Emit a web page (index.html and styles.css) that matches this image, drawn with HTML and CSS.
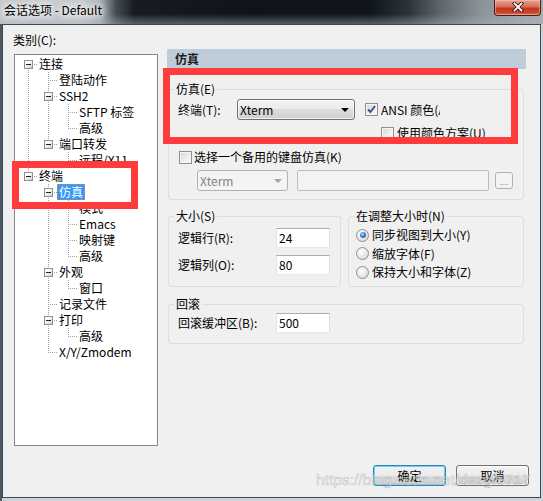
FILE: index.html
```html
<!DOCTYPE html>
<html lang="zh">
<head>
<meta charset="utf-8">
<title>会话选项 - Default</title>
<link rel="stylesheet" href="styles.css">
</head>
<body>
<div class="window">
  <div class="titlebar">
    <div class="title">会话选项 - Default</div>
    <div class="close">
      <svg width="12" height="10" viewBox="0 0 12 10"><path d="M2.5 1.5 L9.5 8.5 M9.5 1.5 L2.5 8.5" stroke="#3a1610" stroke-width="3.6" stroke-linecap="square" fill="none"/><path d="M2.5 1.5 L9.5 8.5 M9.5 1.5 L2.5 8.5" stroke="#ffffff" stroke-width="1.8" stroke-linecap="square" fill="none"/></svg>
    </div>
  </div>
  <div class="client">
    <div class="main">
      <div class="left">
        <div class="cat">类别(C):</div>
        <div class="tree">
          <div class="row"><span class="c rootfirst"><span class="ex"></span></span><span class="lb">连接</span></div>
          <div class="row"><span class="c pass"></span><span class="c tee"></span><span class="lb">登陆动作</span></div>
          <div class="row"><span class="c pass"></span><span class="c tee"><span class="ex"></span></span><span class="lb">SSH2</span></div>
          <div class="row"><span class="c pass"></span><span class="c pass"></span><span class="c tee"></span><span class="lb">SFTP 标签</span></div>
          <div class="row"><span class="c pass"></span><span class="c pass"></span><span class="c elbow"></span><span class="lb">高级</span></div>
          <div class="row"><span class="c pass"></span><span class="c elbow"><span class="ex"></span></span><span class="lb">端口转发</span></div>
          <div class="row"><span class="c pass"></span><span class="c"></span><span class="c elbow"></span><span class="lb">远程/X11</span></div>
          <div class="row"><span class="c elbow"><span class="ex"></span></span><span class="lb">终端</span></div>
          <div class="row"><span class="c"></span><span class="c tee"><span class="ex"></span></span><span class="lb sel">仿真</span></div>
          <div class="row"><span class="c"></span><span class="c pass"></span><span class="c tee"></span><span class="lb">模式</span></div>
          <div class="row"><span class="c"></span><span class="c pass"></span><span class="c tee"></span><span class="lb">Emacs</span></div>
          <div class="row"><span class="c"></span><span class="c pass"></span><span class="c tee"></span><span class="lb">映射键</span></div>
          <div class="row"><span class="c"></span><span class="c pass"></span><span class="c elbow"></span><span class="lb">高级</span></div>
          <div class="row"><span class="c"></span><span class="c tee"><span class="ex"></span></span><span class="lb">外观</span></div>
          <div class="row"><span class="c"></span><span class="c pass"></span><span class="c elbow"></span><span class="lb">窗口</span></div>
          <div class="row"><span class="c"></span><span class="c tee"></span><span class="lb">记录文件</span></div>
          <div class="row"><span class="c"></span><span class="c tee"><span class="ex"></span></span><span class="lb">打印</span></div>
          <div class="row"><span class="c"></span><span class="c pass"></span><span class="c elbow"></span><span class="lb">高级</span></div>
          <div class="row"><span class="c"></span><span class="c elbow"></span><span class="lb">X/Y/Zmodem</span></div>
        </div>
      </div>
      <div class="right">
        <div class="hdr">仿真</div>
        <fieldset class="fs f1">
          <legend>仿真(E)</legend>
          <div class="fb1">
            <div class="r1">
              <span class="lbl-t">终端(T):</span>
              <span class="combo"><span>Xterm</span><span class="arrow"></span></span>
              <span class="cb on"><svg width="11" height="11" viewBox="0 0 11 11"><polyline points="2,5.3 4.4,8 9,2" fill="none" stroke="#3b4f88" stroke-width="1.9"/></svg></span>
              <span class="ansi">ANSI 颜色(A)</span>
            </div>
            <div class="r2">
              <span class="cb"></span>
              <span class="cbl">使用颜色方案(U)</span>
            </div>
            <div class="r3">
              <span class="cb"></span>
              <span class="cbl2">选择一个备用的键盘仿真(K)</span>
            </div>
            <div class="r4">
              <span class="combo dis"><span>Xterm</span><span class="arrow"></span></span>
              <span class="dedit"></span>
              <span class="dots">...</span>
            </div>
          </div>
        </fieldset>
        <div class="pair">
          <fieldset class="fs fsize">
            <legend>大小(S)</legend>
            <div class="fb2">
              <div class="frow"><span class="flbl">逻辑行(R):</span><span class="edit">24</span></div>
              <div class="frow gap"><span class="flbl">逻辑列(O):</span><span class="edit">80</span></div>
            </div>
          </fieldset>
          <fieldset class="fs fresize">
            <legend>在调整大小时(N)</legend>
            <div class="fb3">
              <div class="rrow"><span class="rd on"><span class="dot"></span></span><span class="rl">同步视图到大小(Y)</span></div>
              <div class="rrow"><span class="rd"></span><span class="rl">缩放字体(F)</span></div>
              <div class="rrow"><span class="rd"></span><span class="rl">保持大小和字体(Z)</span></div>
            </div>
          </fieldset>
        </div>
        <fieldset class="fs f3">
          <legend>回滚</legend>
          <div class="fb4">
            <div class="frow"><span class="flbl">回滚缓冲区(B):</span><span class="edit">500</span></div>
          </div>
        </fieldset>
      </div>
    </div>
    <div class="btns">
      <span class="btn def">确定</span>
      <span class="btn">取消</span>
    </div>
    <div class="wm">https://blog.csdn.net/dszgf5717</div>
  </div>
  <div class="mark mark-tree"></div>
  <div class="mark mark-emu"></div>
</div>
</body>
</html>
```

FILE: styles.css
```css
* { box-sizing: border-box; }
body {
  margin: 0;
  font-family: "Noto Sans CJK SC", "Noto Sans", sans-serif;
  font-size: 12px;
  line-height: 16px;
  color: #000;
}
.window {
  position: relative;
  width: 543px;
  height: 501px;
  overflow: hidden;
  display: flex;
  flex-direction: column;
  background: linear-gradient(to right, #4e5862 0, #4e5862 2px, #cdd3d9 2px);
}
.titlebar {
  height: 24px;
  flex: none;
  display: flex;
  justify-content: space-between;
  align-items: flex-start;
  background:
    linear-gradient(to bottom, rgba(200,206,212,0) 0, rgba(200,206,212,0) 14px, rgba(170,178,186,0.45) 24px),
    linear-gradient(to right, #c4c8cc 0, #c7cbce 82px, #aeb3b8 100px, #454c53 116px, #161c22 134px, #0e1419 250px, #10161c 370px, #2b3239 408px, #5e666d 440px, #8b9298 480px, #a8aeb3 543px);
}
.title {
  padding: 2px 0 0 4px;
  line-height: 16px;
  color: #000;
  text-shadow: 0 0 6px #fff, 0 0 8px #fff, 0 0 10px #eef;
}
.close {
  width: 47px;
  height: 16px;
  margin-right: 2px;
  border: 1px solid #4b1c14;
  border-top: none;
  border-radius: 0 0 4px 4px;
  background: linear-gradient(to bottom, #e7a493 0, #d66e58 45%, #c2391d 55%, #c9452a 85%, #e0785f 100%);
  box-shadow: inset 0 0 0 1px rgba(255,210,200,0.45);
  display: flex;
  align-items: center;
  justify-content: center;
}
.close svg { display: block; margin-top: -1px; }

.client {
  position: relative;
  margin: 0 2px 3px 2px;
  height: 474px;
  border: 1px solid #3b4856;
  background: #f0f0f0;
  display: flex;
  flex-direction: column;
}
.main {
  display: flex;
  align-items: flex-start;
  gap: 9px;
  padding-left: 11px;
}
.left { width: 144px; padding-top: 7px; }
.cat { margin: 0 0 6px -1px; height: 16px; }
.tree {
  height: 392px;
  border: 1px solid #828790;
  background: #fff;
  padding: 1px 0 0 3px;
}
.row { display: flex; height: 16px; }
.c {
  --dv: repeating-linear-gradient(to bottom, #a0a0a0 0 1px, transparent 1px 2px);
  --dh: repeating-linear-gradient(to right, #a0a0a0 0 1px, transparent 1px 2px);
  width: 20px;
  height: 16px;
  flex: none;
  display: flex;
  align-items: flex-start;
}
.pass { background: var(--dv) 10px 0 / 1px 16px no-repeat; }
.tee { background: var(--dv) 10px 0 / 1px 16px no-repeat, var(--dh) 10px 8px / 10px 1px no-repeat; }
.elbow { background: var(--dv) 10px 0 / 1px 9px no-repeat, var(--dh) 10px 8px / 10px 1px no-repeat; }
.rootfirst { background: var(--dv) 10px 8px / 1px 8px no-repeat, var(--dh) 10px 8px / 10px 1px no-repeat; }
.ex {
  width: 9px;
  height: 9px;
  margin: 4px 0 0 6px;
  border: 1px solid #919191;
  background: linear-gradient(135deg, #ffffff 35%, #c9c9c9 100%);
  display: flex;
  align-items: center;
  justify-content: center;
}
.ex::before { content: ""; width: 5px; height: 1px; background: #1d1d1d; }
.lb { padding: 0 2px 0 1px; white-space: nowrap; height: 16px; }
.lb.sel {
  background: #3399ff;
  color: #fff;
  outline: 1px dotted #d08a3a;
  outline-offset: -1px;
  padding: 0 2px 0 2px;
  margin-left: -1px;
}

.right {
  width: 359px;
  margin-top: 24px;
  display: flex;
  flex-direction: column;
}
.hdr {
  height: 20px;
  background: #bfcddb;
  font-weight: bold;
  padding: 1px 0 0 8px;
  line-height: 18px;
  color: #1e1e1e;
}
.fs {
  margin: 0 2px 0 1px;
  padding: 0;
  border: 1px solid #d5dfe5;
  border-radius: 3px;
  min-width: 0;
}
.fs legend {
  margin-left: 5px;
  padding: 0 2px;
  line-height: 16px;
}
.f1 { margin-top: 12px; }
.fb1 { padding: 2px 0 8px 9px; }
.r1 { display: flex; align-items: center; height: 21px; }
.lbl-t { width: 59px; flex: none; }
.combo {
  width: 118px;
  height: 21px;
  flex: none;
  border: 1px solid #707070;
  border-radius: 3px;
  background: linear-gradient(to bottom, #f2f2f2 0, #ebebeb 50%, #dddddd 50%, #cfcfcf 100%);
  box-shadow: inset 0 0 0 1px rgba(255,255,255,0.7);
  display: flex;
  align-items: center;
  justify-content: space-between;
  padding: 0 5px 0 2px;
}
.arrow {
  width: 0;
  height: 0;
  border-left: 4px solid transparent;
  border-right: 4px solid transparent;
  border-top: 4px solid #000;
}
.cb {
  width: 13px;
  height: 13px;
  flex: none;
  border: 1px solid #8e8f8f;
  background: linear-gradient(135deg, #d3d6da 0, #f0f0f0 60%, #fdfdfd 100%);
  box-shadow: inset 0 0 0 1px #f6f6f6;
  display: block;
}
.cb svg { display: block; }
.r1 .cb { margin-left: 10px; }
.ansi { width: 59px; margin-left: 3px; overflow: hidden; white-space: nowrap; flex: none; }
.r2 { display: flex; align-items: center; height: 16px; margin-top: 5px; padding-left: 203px; }
.cbl { margin-left: 3px; white-space: nowrap; }
.r3 { display: flex; align-items: center; height: 16px; margin-top: 8px; padding-left: 1px; }
.cbl2 { margin-left: 2px; white-space: nowrap; }
.r4 { display: flex; align-items: center; height: 21px; margin-top: 5px; padding-left: 19px; }
.combo.dis {
  width: 91px;
  border-color: #adb2b5;
  background: #f4f4f4;
  box-shadow: none;
  color: #838383;
}
.combo.dis .arrow { border-top-color: #a3a3a3; }
.dedit {
  width: 192px;
  height: 21px;
  margin-left: 9px;
  border: 1px solid #bcbcbc;
  border-radius: 2px;
  background: #f3f3f3;
  flex: none;
}
.dots {
  width: 18px;
  height: 17px;
  margin-left: 6px;
  flex: none;
  border: 1px solid #adb2b5;
  border-radius: 3px;
  background: #f4f4f4;
  color: #7a7a7a;
  font-family: "Liberation Sans", sans-serif;
  font-size: 10px;
  line-height: 17px;
  text-align: center;
}

.pair { display: flex; gap: 7px; margin: 8px 2px 0 1px; }
.pair .fs { margin: 0; }
.fsize { width: 173px; flex: none; }
.fresize { flex: 1; }
.fb2 { padding: 4px 0 11px 9px; }
.frow { display: flex; align-items: center; height: 20px; }
.frow.gap { margin-top: 7px; }
.flbl { width: 98px; flex: none; white-space: nowrap; }
.edit {
  width: 54px;
  height: 20px;
  flex: none;
  border: 1px solid;
  border-color: #abadb3 #dbdfe6 #e3e9ef #e2e3ea;
  background: #fff;
  padding-left: 2px;
  line-height: 18px;
}
.fb3 { padding: 2px 0 0 7px; }
.rrow { display: flex; align-items: center; height: 18.5px; }
.rd {
  width: 13px;
  height: 13px;
  flex: none;
  border-radius: 50%;
  border: 1px solid #8e8f8f;
  background: radial-gradient(circle at 35% 35%, #ffffff 0, #e6e6e6 55%, #cfcfcf 100%);
  display: flex;
  align-items: center;
  justify-content: center;
}
.dot {
  width: 6px;
  height: 6px;
  border-radius: 50%;
  background: radial-gradient(circle at 40% 35%, #a9dcff 0, #3a86d6 45%, #0f3c7a 100%);
}
.rl { margin-left: 3px; white-space: nowrap; }
.f3 { margin-top: 9px; }
.fb4 { padding: 1px 0 10px 9px; }

.btns {
  display: flex;
  justify-content: flex-end;
  gap: 10px;
  margin-top: 19px;
  padding-right: 11px;
}
.btn {
  width: 73px;
  height: 21px;
  border: 1px solid #707070;
  border-radius: 3px;
  background: linear-gradient(to bottom, #f2f2f2 0, #ebebeb 50%, #dddddd 50%, #cfcfcf 100%);
  box-shadow: inset 0 0 0 1px #fcfcfc;
  text-align: center;
  line-height: 19px;
}
.btn.def {
  border-color: #3c7fb1;
  box-shadow: inset 0 0 0 1px #5fd6f7;
}
.wm {
  position: absolute;
  left: 313px;
  top: 446px;
  font-family: "Liberation Sans", sans-serif;
  font-size: 15.5px;
  line-height: 18px;
  color: rgba(255,255,255,0.55);
  -webkit-text-stroke: 0.6px rgba(150,150,150,0.55);
  white-space: nowrap;
  pointer-events: none;
}
.mark {
  position: absolute;
  border: 7px solid #ff3b3b;
  pointer-events: none;
}
.mark-tree { left: 12px; top: 161px; width: 126px; height: 48px; }
.mark-emu { left: 163px; top: 68px; width: 355px; height: 76px; }
```
